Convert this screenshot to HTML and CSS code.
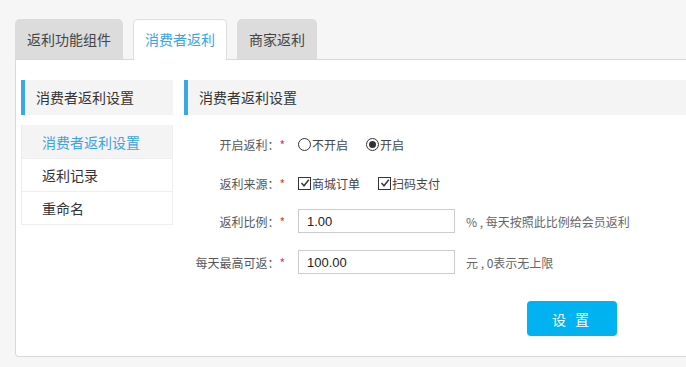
FILE: index.html
```html
<!DOCTYPE html>
<html lang="zh-CN">
<head>
    <meta charset="UTF-8">
    <title>消费者返利</title>
    <link rel="stylesheet" href="styles.css">
</head>
<body>
    <div class="tabs">
        <div class="tab">返利功能组件</div>
        <div class="tab active">消费者返利</div>
        <div class="tab">商家返利</div>
    </div>

    <div class="panel">
        <!-- left menu -->
        <div class="sidebar">
            <div class="box-title">消费者返利设置</div>
            <ul class="menu">
                <li class="current">消费者返利设置</li>
                <li>返利记录</li>
                <li>重命名</li>
            </ul>
        </div>

        <!-- settings form -->
        <div class="content">
            <div class="box-title">消费者返利设置</div>
            <div class="form">
                <div class="row">
                    <label class="label">开启返利：<em>*</em></label>
                    <div class="field">
                        <span class="opt"><i class="radio"></i>不开启</span>
                        <span class="opt"><i class="radio on"></i>开启</span>
                    </div>
                </div>
                <div class="row">
                    <label class="label">返利来源：<em>*</em></label>
                    <div class="field">
                        <span class="opt"><i class="check"><svg width="10" height="10" viewBox="0 0 10 10"><path d="M1.5 5 L4 7.8 L8.8 1.8" fill="none" stroke="#333" stroke-width="1.4"/></svg></i>商城订单</span>
                        <span class="opt"><i class="check"><svg width="10" height="10" viewBox="0 0 10 10"><path d="M1.5 5 L4 7.8 L8.8 1.8" fill="none" stroke="#333" stroke-width="1.4"/></svg></i>扫码支付</span>
                    </div>
                </div>
                <div class="row">
                    <label class="label">返利比例：<em>*</em></label>
                    <div class="field">
                        <input class="text" type="text" value="1.00">
                        <span class="tip">% , 每天按照此比例给会员返利</span>
                    </div>
                </div>
                <div class="row">
                    <label class="label">每天最高可返：<em>*</em></label>
                    <div class="field">
                        <input class="text" type="text" value="100.00">
                        <span class="tip">元 , 0表示无上限</span>
                    </div>
                </div>
                <div class="actions">
                    <button class="btn">设 置</button>
                </div>
            </div>
        </div>
    </div>
</body>
</html>
```

FILE: styles.css
```css
body {
    margin: 0;
    background: #f6f6f6;
    font-family: "Noto Sans CJK SC", "Liberation Sans", sans-serif;
    color: #333;
    font-size: 12px;
}

.tabs {
    display: flex;
    padding: 19px 0 0 15px;
    gap: 10px;
    height: 40px;
}

.tab {
    height: 39px;
    line-height: 39px;
    padding: 0 11px;
    font-size: 14px;
    color: #444;
    background: #dcdcdc;
    border: 1px solid #dcdcdc;
    border-bottom: none;
    border-radius: 5px 5px 0 0;
}

.tab.active {
    background: #fff;
    color: #3aa3e3;
    border-color: #ddd;
    height: 40px;
    position: relative;
    z-index: 1;
}

.panel {
    display: flex;
    gap: 11px;
    margin-left: 15px;
    height: 276px;
    padding: 20px 0 0 5px;
    background: #fff;
    border: 1px solid #d8d8d8;
    border-right: none;
    border-radius: 0 0 0 4px;
}

.sidebar {
    width: 152px;
    flex-shrink: 0;
}

.box-title {
    height: 35px;
    line-height: 35px;
    background: #f4f4f4;
    border-left: 4px solid #3aa8e8;
    padding-left: 11px;
    font-size: 14px;
    color: #333;
}

.menu {
    list-style: none;
    margin: 10px 0 0;
    padding: 0;
    border: 1px solid #eee;
    border-top: none;
}

.menu li {
    height: 32px;
    line-height: 32px;
    padding-left: 20px;
    font-size: 14px;
    color: #333;
    border-top: 1px solid #eee;
}

.menu li.current {
    background: #f4f4f4;
    color: #3aa3e3;
    border-top-color: #f4f4f4;
}

.content {
    flex: 1;
}

.form {
    padding-top: 16px;
}

.row {
    display: flex;
    align-items: center;
    height: 26px;
    margin-bottom: 13px;
}

.row:nth-child(2) {
    margin-bottom: 12px;
}

.row:nth-child(3) {
    margin-bottom: 15px;
}

.label {
    width: 101px;
    text-align: right;
    color: #555;
    margin-right: 13px;
}

.label em {
    font-style: normal;
    color: #e4393c;
}

.field {
    display: flex;
    align-items: center;
}

.opt {
    display: inline-flex;
    align-items: center;
    margin-right: 18px;
    color: #444;
}

.radio {
    display: inline-block;
    width: 11px;
    height: 11px;
    border: 1px solid #333;
    border-radius: 50%;
    margin-right: 1px;
    position: relative;
}

.radio.on::after {
    content: "";
    position: absolute;
    left: 2px;
    top: 2px;
    width: 7px;
    height: 7px;
    border-radius: 50%;
    background: #333;
}

.check {
    display: inline-flex;
    align-items: center;
    justify-content: center;
    width: 11px;
    height: 11px;
    border: 1px solid #333;
    margin-right: 1px;
}

.text {
    width: 157px;
    height: 24px;
    box-sizing: border-box;
    border: 1px solid #ccc;
    padding: 0 8px;
    font-family: "Liberation Sans", sans-serif;
    font-size: 13px;
    color: #222;
}

.tip {
    margin-left: 11px;
    color: #666;
}

.actions {
    padding: 13px 0 0 343px;
}

.btn {
    width: 90px;
    height: 35px;
    border: none;
    border-radius: 4px;
    background: #00b3f0;
    color: #fff;
    font-family: "Noto Sans CJK SC", sans-serif;
    font-size: 14px;
    letter-spacing: 3px;
}
```
